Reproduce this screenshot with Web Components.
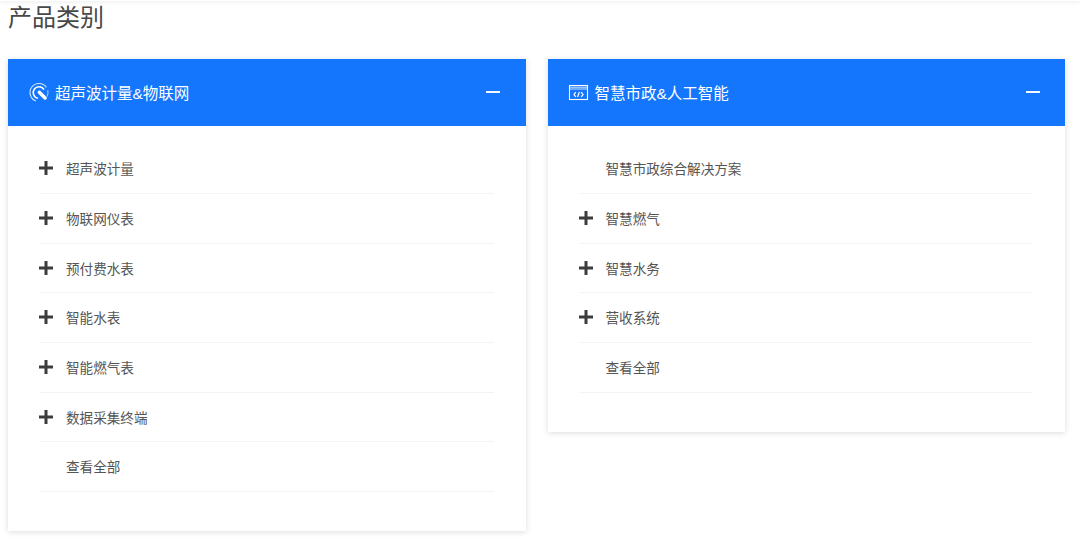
<!DOCTYPE html>
<html lang="zh"><head><meta charset="utf-8"><title>产品类别</title>
<style>
html,body{margin:0;padding:0;background:#fff;overflow:hidden}
body{font-family:"Liberation Sans","Noto Sans CJK SC",sans-serif;height:542px}
</style></head><body>
<product-page>
  <category-card title-text="超声波计量&物联网" icon="meter">
    <category-item expand>超声波计量</category-item>
    <category-item expand>物联网仪表</category-item>
    <category-item expand>预付费水表</category-item>
    <category-item expand>智能水表</category-item>
    <category-item expand>智能燃气表</category-item>
    <category-item expand>数据采集终端</category-item>
    <category-item>查看全部</category-item>
  </category-card>
  <category-card title-text="智慧市政&人工智能" icon="code">
    <category-item>智慧市政综合解决方案</category-item>
    <category-item expand>智慧燃气</category-item>
    <category-item expand>智慧水务</category-item>
    <category-item expand>营收系统</category-item>
    <category-item>查看全部</category-item>
  </category-card>
</product-page>
<script>
const ICONS={
meter:`<svg width="21" height="21" viewBox="0 0 21 21" fill="none" stroke="#fff" style="transform:translate(.5px,.5px)"><path d="M17.87 4.84A9 9 0 1 0 7.42 18.46" stroke-width="1.1" opacity=".8"/><path d="M19.2 7.6a9 9 0 0 1-.5 6.4" stroke-width="1.1" opacity=".6"/><path d="M15.52 7.1A5.8 5.8 0 1 0 9.49 15.71" stroke-width="1.6"/><path d="M10.8 9.7 16.6 15.5" stroke-width="3.4" stroke-linecap="round"/></svg>`,
code:`<svg width="21" height="17" viewBox="0 0 21 17" fill="none" stroke="#fff" stroke-width="1.1"><rect x="1.5" y="1.5" width="18" height="14"/><path d="M1.5 5H19.500M1.5 3.200H19.500" stroke-width=".8"/><path d="M7.800 8.200 6 10.500l1.800 2.300M13.200 8.200 15 10.500l-1.800 2.300M11.400 8 9.600 13" stroke-width="1.200"/></svg>`};
class ProductPage extends HTMLElement{constructor(){super();this.attachShadow({mode:'open'}).innerHTML=`<style>
:host{display:block}
.bar{height:1px;box-shadow:0 0 4px rgba(0,0,0,.25)}
h2{margin:0;padding:0 0 0 8px;height:58px;font:400 24px/33px "Liberation Sans","Noto Sans CJK SC",sans-serif;color:#484848;box-sizing:border-box}
.grid{display:grid;grid-template-columns:1fr 1fr;gap:22px;padding:0 15px 0 8px;align-items:start}
</style><div class="bar"></div><h2>产品类别</h2><div class="grid"><slot></slot></div>`}}
class CategoryCard extends HTMLElement{constructor(){super();this.attachShadow({mode:'open'}).innerHTML=`<style>
:host{display:block;background:#fff;box-shadow:0 1px 6px rgba(0,0,0,.14)}
.head{height:67px;background:#1376fd;color:#fff;display:flex;align-items:center;padding:0 25.5px 0 20px;font-size:15.5px}
.ic{width:21px;display:flex;justify-content:center;margin-right:6px}
.t{flex:1;padding-bottom:1px}
.minus{width:14px;height:2px;background:#f4f8ff;margin-top:-1px}
.body{padding:18.4px 32px 39.400px 31px}
</style><div class="head"><span class="ic"></span><span class="t"></span><span class="minus"></span></div><div class="body"><slot></slot></div>`;}
connectedCallback(){const s=this.shadowRoot;s.querySelector('.t').textContent=this.getAttribute('title-text');s.querySelector('.ic').innerHTML=ICONS[this.getAttribute('icon')]}}
class CategoryItem extends HTMLElement{constructor(){super();this.attachShadow({mode:'open'}).innerHTML=`<style>
:host{display:flex;align-items:center;height:49.67px;box-sizing:border-box;border-bottom:1px solid #f3f3f3;padding-bottom:1px;font-size:13.6px;color:#555}
.p{width:27px;flex:none;display:flex;align-items:center}
svg{display:block}
</style><span class="p"></span><slot></slot>`;}
connectedCallback(){if(this.hasAttribute('expand'))this.shadowRoot.querySelector('.p').innerHTML=`<svg width="14" height="14" viewBox="0 0 14 14"><path d="M5.500 0h3v5.500H14v3H8.500V14h-3V8.500H0v-3h5.500z" fill="#3c3c3c"/></svg>`}}
customElements.define('product-page',ProductPage);customElements.define('category-card',CategoryCard);customElements.define('category-item',CategoryItem);
</script></body></html>
